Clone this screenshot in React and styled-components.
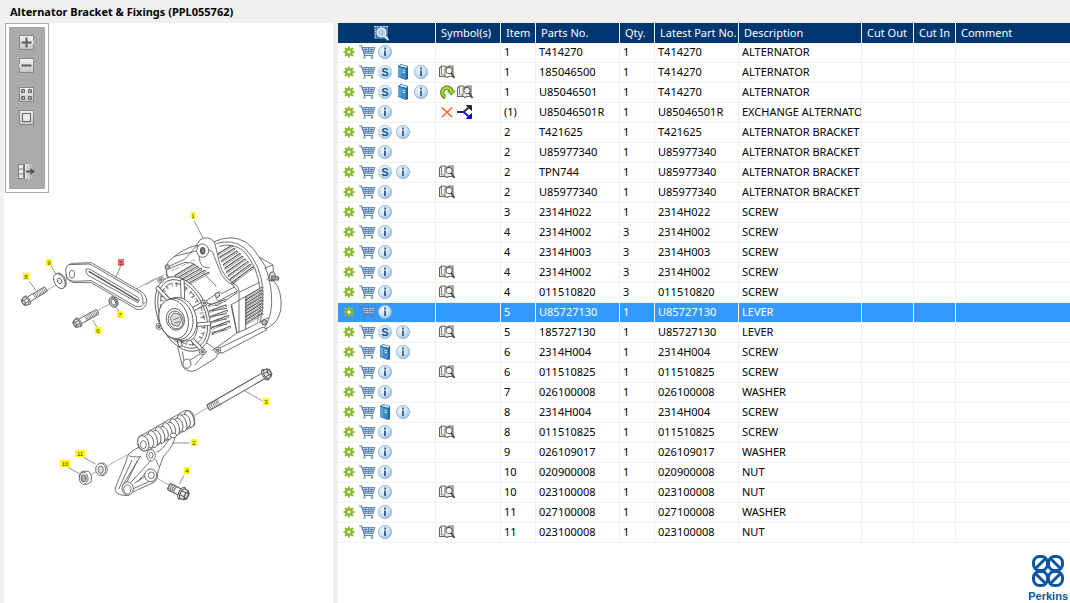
import styled, { createGlobalStyle } from 'styled-components'

const GlobalStyle = createGlobalStyle`
  * {
    box-sizing: border-box;
  }

  body {
    margin: 0;
    background-color: #f0f0f0;
    font-family: 'Noto Sans', 'Open Sans', sans-serif;
    font-size: 11px;
    color: #000;
  }
`

const Page = styled.div`
  display: flex;
  flex-direction: column;
  min-height: 100vh;
`

const TitleBar = styled.h1`
  margin: 0;
  padding: 4px 10px 0;
  height: 23px;
  font-size: 11px;
  line-height: 16px;
  font-weight: 700;
`

const Content = styled.main`
  flex: 1;
  display: grid;
  grid-template-columns: minmax(0, 329fr) minmax(0, 732fr);
  column-gap: 5px;
  padding-left: 4px;
`

const DrawingPanel = styled.section`
  background-color: #fff;
`

const ToolFrame = styled.div`
  width: 44px;
  margin-left: 1px;
  padding: 3px;
  border: 1px solid #aaa;
  background-color: #fff;
`

const ToolStrip = styled.div`
  display: flex;
  flex-direction: column;
  align-items: center;
  gap: 5px;
  padding: 7px 0 8px;
  background-color: #aaa;
`

const ToolButton = styled.button`
  width: 20px;
  height: 18px;
  margin-top: ${(props) => props.$space || 0}px;
  padding: 0;
  border: 0;
  background: none;
  cursor: pointer;

  svg {
    display: block;
  }
`

const Drawing = styled.svg`
  display: block;
  width: 100%;
  font-family: 'Liberation Sans', Arial, sans-serif;
`

const PartsPanel = styled.section`
  display: flex;
  flex-direction: column;
  background-color: #fff;
`

const Table = styled.table`
  width: 100%;
  table-layout: fixed;
  border-collapse: separate;
  border-spacing: 0;
`

const Head = styled.th`
  height: 20px;
  padding: 0 0 0 5px;
  border-right: 1px solid #f0f0f0;
  background-color: #003770;
  color: #fff;
  line-height: 18px;
  font-weight: 400;
  text-align: left;
  white-space: nowrap;

  &:last-child {
    border-right: 0;
  }
`

const Cell = styled.td`
  height: 20px;
  padding: 0 0 0 ${(props) => (props.$icons ? 2 : 3)}px;
  border-right: 1px solid #f0f0f0;
  border-bottom: 1px solid #f0f0f0;
  line-height: 18px;
  vertical-align: top;
  white-space: nowrap;
  overflow: hidden;

  &:last-child {
    border-right: 0;
  }
`

const Row = styled.tr`
  background-color: ${(props) => (props.$selected ? '#3399ff' : '#fff')};
  color: ${(props) => (props.$selected ? '#fff' : '#000')};
`

const IconRow = styled.div`
  display: flex;
  align-items: center;
  height: 18px;
`

const HeadIcon = styled.div`
  display: flex;
  justify-content: center;
  padding-right: 16px;
`

const IconButton = styled.button`
  display: flex;
  width: 18px;
  height: 18px;
  padding: 0;
  border: 0;
  background: none;
  cursor: pointer;
`

const Brand = styled.footer`
  display: flex;
  flex-direction: column;
  align-items: center;
  align-self: flex-end;
  margin: auto 2px 0 0;
  color: #0a55a0;
  font-family: 'Liberation Sans', Arial, sans-serif;
  font-size: 11px;
  line-height: 14px;
  font-weight: 700;
`

const columns = [
  ['Symbol(s)', 65],
  ['Item', 35],
  ['Parts No.', 84],
  ['Qty.', 35],
  ['Latest Part No.', 84],
  ['Description', 123],
  ['Cut Out', 52],
  ['Cut In', 42],
  ['Comment', null],
]

// actions, symbols, item, part, qty, latest part, description
const rows = [
  ['gci', '', '1', 'T414270', '1', 'T414270', 'ALTERNATOR'],
  ['gcsbi', 'm', '1', '185046500', '1', 'T414270', 'ALTERNATOR'],
  ['gcsbi', 'rm', '1', 'U85046501', '1', 'T414270', 'ALTERNATOR'],
  ['gci', 'xf', '(1)', 'U85046501R', '1', 'U85046501R', 'EXCHANGE ALTERNATO'],
  ['gcsi', '', '2', 'T421625', '1', 'T421625', 'ALTERNATOR BRACKET'],
  ['gci', '', '2', 'U85977340', '1', 'U85977340', 'ALTERNATOR BRACKET'],
  ['gcsi', 'm', '2', 'TPN744', '1', 'U85977340', 'ALTERNATOR BRACKET'],
  ['gci', 'm', '2', 'U85977340', '1', 'U85977340', 'ALTERNATOR BRACKET'],
  ['gci', '', '3', '2314H022', '1', '2314H022', 'SCREW'],
  ['gci', '', '4', '2314H002', '3', '2314H002', 'SCREW'],
  ['gci', '', '4', '2314H003', '3', '2314H003', 'SCREW'],
  ['gci', 'm', '4', '2314H002', '3', '2314H002', 'SCREW'],
  ['gci', 'm', '4', '011510820', '3', '011510820', 'SCREW'],
  ['gci', '', '5', 'U85727130', '1', 'U85727130', 'LEVER'],
  ['gcsi', 'm', '5', '185727130', '1', 'U85727130', 'LEVER'],
  ['gcbi', '', '6', '2314H004', '1', '2314H004', 'SCREW'],
  ['gci', 'm', '6', '011510825', '1', '011510825', 'SCREW'],
  ['gci', '', '7', '026100008', '1', '026100008', 'WASHER'],
  ['gcbi', '', '8', '2314H004', '1', '2314H004', 'SCREW'],
  ['gci', 'm', '8', '011510825', '1', '011510825', 'SCREW'],
  ['gci', '', '9', '026109017', '1', '026109017', 'WASHER'],
  ['gci', '', '10', '020900008', '1', '020900008', 'NUT'],
  ['gci', 'm', '10', '023100008', '1', '023100008', 'NUT'],
  ['gci', '', '11', '027100008', '1', '027100008', 'WASHER'],
  ['gci', 'm', '11', '023100008', '1', '023100008', 'NUT'],
]

const selectedRow = 13

const glyphs = {
  g: {
    label: 'Options',
    art: (
      <g fill="none">
        <path d="M9 3.5v11M3.5 9h11M5 5l8 8M13 5l-8 8" stroke="#8dbb3a" strokeWidth="2" />
        <circle cx="9" cy="9" r="2.8" fill="#fff" stroke="#86b92f" strokeWidth="2.4" />
      </g>
    ),
  },
  c: {
    label: 'Add to cart',
    art: (
      <g fill="none" stroke="#5b7fac">
        <path d="M4 4.5h12.5l-1.5 6H6z" fill="#c3d3e6" stroke="none" />
        <path d="M1 3h2.5l2.5 7.5.5 2H15" strokeWidth="1.2" />
        <path d="M4 4.5h13M5 6.5h11.5M5.5 8.5h10.500M6 10.5h9.5" strokeWidth="0.9" />
        <path d="M7.5 4.5l.5 6M10.5 4.5v6M13.5 4.5l-.5 6M17 4.5l-2 6" strokeWidth="0.8" />
        <circle cx="6.5" cy="14.5" r="0.9" />
        <circle cx="14" cy="14.5" r="0.9" />
      </g>
    ),
  },
  s: {
    label: 'Supersession',
    art: (
      <g>
        <circle cx="9" cy="9" r="6.8" fill="url(#disc)" stroke="#a4c3de" strokeWidth="0.6" />
        <text x="9" y="13" textAnchor="middle" fontSize="11" fontWeight="700" fill="#0d5592">S</text>
      </g>
    ),
  },
  b: {
    label: 'Catalogue',
    art: (
      <g>
        <path d="M4 3l3-2 7 2v13l-2 1-8-3z" fill="#1f659c" />
        <path d="M7 4.5l5 1.5v10.5l-5-2z" fill="#3f8dc6" />
        <path d="M4 3.5l3 1v10l-3-1z" fill="#5aa3d8" />
        <path d="M5 3l2.5-1.2 6 1.7-1.3 1.2z" fill="#e2edf5" />
        <path d="M8.5 7l2.5.8M8.5 9l2.5.8" stroke="#d7eafa" />
      </g>
    ),
  },
  i: {
    label: 'Information',
    art: (
      <g>
        <circle cx="9" cy="9" r="6.7" fill="url(#disc)" stroke="#91b3d2" strokeWidth="0.8" />
        <path d="M8 4.5h2v2H8zM8 7.5h2V13H8z" fill="#42699c" />
      </g>
    ),
  },
  m: {
    label: 'Find in book',
    art: (
      <g fill="none" stroke="#66645c">
        <path d="M3.5 3h3L9 4.5 11 3h4v10.5h-4L9 14.5l-1.5-1h-6V5z" fill="#f4f4ee" strokeWidth="1.1" />
        <path d="M3.5 3.5v8l3.5 1v-8" strokeWidth="0.8" />
        <circle cx="11" cy="7.5" r="3.1" fill="#fbfbfb" strokeWidth="1.1" />
        <path d="M13 10l3.5 5" stroke="#4c4a45" strokeWidth="1.8" />
      </g>
    ),
  },
  r: {
    label: 'Replaced',
    art: (
      <g fill="none">
        <path d="M7.5 14A4.8 4.8 0 1 1 13.6 8" stroke="#4d6415" strokeWidth="4" />
        <path d="M9.5 8H17l-3.7 4.2z" fill="#98d422" stroke="#4d6415" strokeWidth="0.7" />
        <path d="M7.5 13.7A4.6 4.6 0 1 1 13.5 8.7" stroke="#a3e129" strokeWidth="2.4" />
      </g>
    ),
  },
  x: {
    label: 'Not available',
    art: <path d="M4 4.5l10 9.5M14 4.5L4 14" fill="none" stroke="#ff6429" strokeWidth="1.6" />,
  },
  f: {
    label: 'Alternatives',
    art: (
      <g fill="none" strokeWidth="1.8">
        <path d="M1 9h7" stroke="#111155" />
        <path d="M7.5 9L14 3.5" stroke="#292929" />
        <path d="M7.5 9l6.5 5.5" stroke="#1717aa" />
        <path d="M10.5 2.5h5v5z" fill="#292929" stroke="#292929" strokeWidth="1" />
        <path d="M15.5 10.5v5h-5z" fill="#0505db" stroke="#0505db" strokeWidth="1" />
      </g>
    ),
  },
}

function Glyph({ name, title }) {
  return (
    <svg width="18" height="18" viewBox="0 0 18 18" role={title ? 'img' : undefined} aria-label={title}>
      {glyphs[name].art}
    </svg>
  )
}

function SearchGlyph() {
  return (
    <svg width="18" height="18" viewBox="0 0 18 18" role="img" aria-label="Search">
      <path d="M2 2h14v13H2z" fill="#487baa" />
      <path d="M2 2.5h14" stroke="#d5e6f3" strokeDasharray="2 1" />
      <path d="M3.5 5v9" stroke="#b7d3e8" strokeDasharray="1 1" />
      <circle cx="9.5" cy="8.5" r="4.3" fill="#a9cbe3" stroke="#e7f1f8" strokeWidth="1.4" />
      <path d="M12.7 12l3.6 4" stroke="#e4edf4" strokeWidth="2" />
    </svg>
  )
}

const tools = [
  {
    label: 'Zoom in',
    art: (
      <g>
        <path d="M2.5 1.5h14v5l2 2-2 2v5h-14z" fill="url(#key)" stroke="#888" />
        <path d="M4.5 8.5h10M9.5 3.5v10" stroke="#5e5e5e" strokeWidth="2" />
      </g>
    ),
  },
  {
    label: 'Zoom out',
    art: (
      <g>
        <path d="M2.5 1.5h14v14h-14v-5l-2-2 2-2z" fill="url(#key)" stroke="#888" />
        <path d="M4.5 8.5h10" stroke="#5e5e5e" strokeWidth="2" />
      </g>
    ),
  },
  {
    label: 'Zoom to fit',
    space: 6,
    art: (
      <g>
        <rect x="2.5" y="1.5" width="14" height="14" fill="url(#key)" stroke="#888" />
        <path d="M4.5 3.5h3v3h-3zM11.5 3.5h3v3h-3zM4.5 10.5h3v3h-3zM11.5 10.5h3v3h-3z" fill="#aaa" stroke="#666" />
      </g>
    ),
  },
  {
    label: 'Actual size',
    art: (
      <g>
        <rect x="2.5" y="1.5" width="14" height="14" fill="url(#key)" stroke="#888" />
        <rect x="5.5" y="4.5" width="8" height="8" fill="#e8e8e8" stroke="#686868" />
      </g>
    ),
  },
  {
    label: 'Hide list',
    space: 31,
    art: (
      <g>
        <path d="M1.5 1.5h5v14h-5zM1.5 6h5M1.5 11h5" fill="#eee" stroke="#808080" />
        <path d="M7 1h9v15H7z" fill="url(#fade)" />
        <path d="M7.5 1v15" stroke="#777" />
        <path d="M9 8.5h6" stroke="#555" strokeWidth="2" />
        <path d="M13.5 5l4.5 3.5-4.5 3.5z" fill="#555" />
      </g>
    ),
  },
]

const range = (count) => Array.from({ length: count }, (_, i) => i)

function Fin({ x1, y1, x2, y2 }) {
  return (
    <g strokeLinecap="round">
      <path d={`M${x1} ${y1}L${x2} ${y2}`} stroke="#555" strokeWidth="7" />
      <path d={`M${x1 + 1} ${y1 + 1}L${x2} ${y2 + 1}`} stroke="#f4f4f4" strokeWidth="3" />
    </g>
  )
}

function Alternator() {
  return (
    <g transform="translate(145 205) scale(0.3333)" fill="#fff" stroke="#555" strokeWidth="2.5">
      <path d="M0 240L38 220M48 214L58 209" stroke="#999" />
      <path d="M148 48L174 100" stroke="#777" />
      <path d="M98 425l14 58q16 24 42 12l56-34 18-26-40-40z" />
      <path d="M112 440l6 32 20-8 34-22M150 480l36-42" fill="none" />
      <ellipse cx="126" cy="476" rx="12" ry="14" />
      <path d="M208 110Q260 86 304 112Q326 128 342 156L384 180L387 228Q412 256 408 312Q400 352 372 366L228 444L180 410L64 210V188Q66 170 82 160Q112 132 156 120L166 104Q188 90 208 110z" />
      <path d="M214 116Q262 100 300 130Q350 180 354 262Q356 312 346 352M222 124Q262 112 296 138Q340 184 346 262Q348 310 338 350" fill="none" />
      <path d="M342 156l18 26q22 60 20 114-2 42-22 74M384 180l-26 10M387 228q-18 2-22-8" fill="none" />
      {range(9).map((i) => (
        <Fin key={i} x1={222 + i * 5} y1={146 + i * 11} x2={260 + i * 8} y2={124 + i * 8} />
      ))}
      {range(9).map((i) => (
        <Fin key={i} x1={304} y1={276 + i * 10} x2={352 - (i % 2)} y2={248 + i * 10} />
      ))}
      <path d="M262 240L276 226M258 300l44-26v100M258 300l18 84 24-10 70-36M282 262l62-30" fill="none" />
      <path d="M64 188l56-26 36-42 46 20 22 56q14 34 40 44l12 24-60 38-80-22-70-70z" />
      <path d="M156 122l10 52q10 18 28 14M208 108l16 68q12 42 40 58 20 10 18 30v28M70 192l50-20M88 154l66-16M120 172q28 0 38 14l56 58" fill="none" />
      <path d="M80 198l70-34" stroke="#999" strokeDasharray="26 6" />
      <ellipse cx="173" cy="137" rx="18" ry="20" />
      <ellipse cx="173" cy="137" rx="6" ry="9" fill="#888" strokeWidth="4" />
      <circle cx="67" cy="186" r="7" fill="#bbb" />
      {range(5).map((i) => (
        <Fin key={i} x1={92 + i * 10} y1={212 + i * 6} x2={146 + i * 11} y2={180 + i * 6} />
      ))}
      <path d="M180 290l32-22M212 268q10-14 18-2l38-20 10 12-50 26q-10 8-14-4z" />
      <circle cx="217" cy="270" r="7" fill="#ddd" />
      <path d="M260 300l16 84-76 54M282 292v90" fill="none" />
      {range(6).map((i) => (
        <Fin key={i} x1={193 + i * 2} y1={302 + i * 17} x2={240 + i * 3} y2={286 + i * 16} />
      ))}
      {range(5).map((i) => (
        <path key={i} d={`M200 ${318 + i * 16}l46-8`} stroke="#666" strokeWidth="3" />
      ))}
      <path d="M222 430l132-64 12 8-134 70q-12-2-10-14z" />
      <ellipse cx="113" cy="327" rx="74" ry="118" transform="rotate(-24 113 327)" />
      <ellipse cx="113" cy="327" rx="66" ry="109" transform="rotate(-24 113 327)" />
      <ellipse
        cx="113"
        cy="327"
        rx="54"
        ry="94"
        transform="rotate(-24 113 327)"
        fill="none"
        stroke="#888"
        strokeWidth="12"
        strokeDasharray="5 14 3 9"
      />
      <ellipse cx="113" cy="327" rx="58" ry="98" transform="rotate(-24 113 327)" fill="none" strokeDasharray="16 10" />
      {[
        'M38 250L78 292',
        'M112 228L114 290',
        'M178 294L140 315',
        'M192 356L148 360',
        'M174 438L132 394',
        'M106 420L100 400',
        'M44 344L56 338',
      ].map((d) => (
        <g key={d} strokeLinecap="round">
          <path d={d} strokeWidth="13" />
          <path d={d} stroke="#fff" strokeWidth="8" />
        </g>
      ))}
      {[[47, 224], [178, 294], [172, 440], [42, 364], [218, 436]].map(([x, y]) => (
        <g key={x}>
          <circle cx={x} cy={y} r="9" />
          <circle cx={x} cy={y} r="4" fill="#999" />
        </g>
      ))}
      <path d="M74 282q40-10 66 30 28 50 10 82-8 12-20 14l-32 0z" />
      <ellipse cx="104" cy="342" rx="50" ry="66" transform="rotate(-16 104 342)" />
      <ellipse cx="93" cy="342" rx="50" ry="63" transform="rotate(-16 93 342)" />
      <ellipse cx="86" cy="342" rx="43" ry="60" transform="rotate(-16 86 342)" />
      <ellipse cx="91" cy="343" rx="27" ry="33" transform="rotate(-16 91 343)" />
      <ellipse cx="92" cy="345" rx="22" ry="27" transform="rotate(-16 92 345)" />
      <path d="M76 338l10-14 18 4 6 18-10 18-18-4z" fill="#ddd" />
      <path d="M86 344l16-6M88 354l16-4" />
      <ellipse cx="382" cy="214" rx="9" ry="13" fill="#ddd" strokeWidth="3" />
      <path d="M380 212l22 4-2 10-20-2z" fill="#999" />
      <circle cx="358" cy="352" r="8" fill="#bbb" strokeWidth="3" />
    </g>
  )
}

function Bolt({ x, y, angle, length, thread, size = 1 }) {
  return (
    <g transform={`translate(${x} ${y}) rotate(${angle}) scale(${size})`}>
      <rect x="8" y="-8" width={length} height="16" rx="3" />
      <path
        d={range(Math.floor(thread / 5)).map((i) => `M${length + 6 - i * 5} -8q4 8 0 16`).join('')}
        fill="none"
        stroke="#777"
      />
      <ellipse cx="4" cy="0" rx="7" ry="15" />
      <path d="M-12 -7l6-5h10l3 7v10l-3 7H-6l-6-5z" fill="#eee" />
      <path d="M-5 -12l-3 7v10l3 7M-8 -5H6M-8 5H6" fill="none" />
      <ellipse cx="-8" cy="0" rx="4" ry="7" fill="#ccc" />
    </g>
  )
}

function Lever() {
  return (
    <g transform="translate(10 240) scale(0.3333)" fill="#fff" stroke="#555" strokeWidth="2.5">
      <path d="M108 152l74-42M262 212l176-98" stroke="#999" />
      <path d="M58 124l20 28M124 78l14 26M332 78l-14 34M314 198l14 16M248 240l14 24" stroke="#777" />
      <path d="M168 102q-6-28 20-32l56-2 152 88q20 18 12 38-8 18-28 14L244 128l-52 0q-24-6-24-26z" />
      <path d="M168 102q2 20 24 22l52-2 134 78q18 4 26-14M176 74l64-2 148 86q14 12 10 32" fill="none" />
      <ellipse cx="186" cy="103" rx="8" ry="12" />
      <path d="M228 88q6-4 12 0l144 84q8 8 0 16L234 106q-8-8-6-18z" />
      <path d="M236 94l148 88" strokeWidth="4" />
      <g transform="rotate(-28 149 123)">
        <ellipse cx="152" cy="123" rx="15" ry="24" />
        <ellipse cx="148" cy="123" rx="15" ry="24" />
        <ellipse cx="149" cy="123" rx="6" ry="9" fill="#eee" />
      </g>
      <g transform="rotate(-28 311 186)">
        <ellipse cx="312" cy="186" rx="11" ry="16" />
        <ellipse cx="309" cy="186" rx="11" ry="16" fill="#ccc" />
        <ellipse cx="310" cy="186" rx="6" ry="10" />
      </g>
      <Bolt x={48} y={183} angle={-31} length={62} thread={48} />
      <Bolt x={202} y={249} angle={-29} length={62} thread={48} />
    </g>
  )
}

function Bracket() {
  return (
    <g transform="translate(50 360) scale(0.3333)" fill="#fff" stroke="#555" strokeWidth="2.5">
      <path d="M430 168l46-26M122 344l16-8M172 318l100-56M310 348l48 28" stroke="#999" />
      <path d="M580 90l56 32M366 249h52M402 346l-14 26M100 292l36 20M54 322l36 20" stroke="#777" />
      <Bolt x={650} y={42} angle={150} length={168} thread={38} size={1.15} />
      <Bolt x={400} y={402} angle={208} length={30} thread={24} size={1.3} />
      <path d="M262 264q-34 18-32 36l-34 84q-4 18 24 22 20 2 28-10l66-30q10-10 10-32l16-44q36-36 36-70z" />
      <path d="M238 288q28 6 34 0l-54 88M246 300l-40 88M262 302l-32 66M254 370l44-30M250 386l62-28M306 298l-68 74M298 326l-36 40M318 298q4 20 12 22M320 276q16-4 36-36" fill="none" />
      <ellipse cx="303" cy="286" rx="13" ry="17" />
      <ellipse cx="303" cy="286" rx="6" ry="9" />
      <ellipse cx="302" cy="346" rx="18" ry="19" />
      <ellipse cx="304" cy="346" rx="9" ry="10" />
      <ellipse cx="233" cy="386" rx="17" ry="20" />
      <ellipse cx="232" cy="388" rx="11" ry="14" />
      <path d="M264 238q0-10 14-14l126-72q28-4 30 28v16l-142 76q-22 6-28-16z" />
      {range(12).map((i) => (
        <ellipse
          key={i}
          cx={418 - i * 11}
          cy={177 + i * 6}
          rx="13"
          ry={i % 2 ? 21 : 26}
          transform={`rotate(-18 ${418 - i * 11} ${177 + i * 6})`}
        />
      ))}
      <ellipse cx="280" cy="250" rx="16" ry="24" transform="rotate(-18 280 250)" />
      <ellipse cx="280" cy="254" rx="9" ry="12" />
      <ellipse cx="370" cy="226" rx="10" ry="7" />
      <ellipse cx="157" cy="328" rx="15" ry="19" />
      <ellipse cx="152" cy="328" rx="15" ry="18" />
      <ellipse cx="152" cy="329" rx="8" ry="11" fill="#ddd" />
      <path d="M87 348l9-14 20 0 9 14-2 18-14 8-16-6z" />
      <ellipse cx="101" cy="355" rx="13" ry="18" />
      <ellipse cx="101" cy="355" rx="8" ry="11" fill="#aaa" />
    </g>
  )
}

const callouts = [
  [193, 216, '1'],
  [49, 263, '9'],
  [26, 277, '8'],
  [121, 263, '5', true],
  [120, 315, '7'],
  [98, 331, '6'],
  [266, 402, '3'],
  [194, 443, '2'],
  [187, 471, '4'],
  [80, 454, '11'],
  [65, 464, '10'],
]

function Callout({ x, y, label, active }) {
  const width = label.length > 1 ? 10 : label === '1' ? 4 : 6
  return (
    <g>
      <rect x={x - width / 2} y={y - 4} width={width} height="7" fill={active ? '#f07070' : '#ffff00'} />
      <text x={x} y={y + 2} fontSize="6" textAnchor="middle" fill={active ? '#802020' : '#333'}>
        {label}
      </text>
    </g>
  )
}

function PartsDrawing() {
  return (
    <Drawing viewBox="4 193 329 320" role="img" aria-label="Alternator bracket and fixings">
      <Alternator />
      <Lever />
      <Bracket />
      {callouts.map(([x, y, label, active]) => (
        <Callout key={label} x={x} y={y} label={label} active={active} />
      ))}
    </Drawing>
  )
}

function SharedGradients() {
  return (
    <defs>
      <radialGradient id="disc" cx="0.4" cy="0.35" r="0.7">
        <stop offset="0" stopColor="#f4fafd" />
        <stop offset="0.6" stopColor="#c9dff0" />
        <stop offset="1" stopColor="#8db8db" />
      </radialGradient>
      <linearGradient id="key" x2="0" y2="1">
        <stop offset="0" stopColor="#f2f2f2" />
        <stop offset="1" stopColor="#c4c4c4" />
      </linearGradient>
      <linearGradient id="fade">
        <stop offset="0" stopColor="#ededed" />
        <stop offset="1" stopColor="#aaa" />
      </linearGradient>
    </defs>
  )
}

function Toolbar() {
  return (
    <ToolFrame>
      <ToolStrip>
        {tools.map((tool, index) => (
          <ToolButton key={tool.label} $space={tool.space} aria-label={tool.label}>
            <svg width="20" height="18" viewBox="0 0 20 18">
              {index === 0 && <SharedGradients />}
              {tool.art}
            </svg>
          </ToolButton>
        ))}
      </ToolStrip>
    </ToolFrame>
  )
}

function PartsTable() {
  return (
    <Table>
      <colgroup>
        <col width="98" />
        {columns.map(([name, width]) => (
          <col key={name} width={width || undefined} />
        ))}
      </colgroup>
      <thead>
        <tr>
          <Head>
            <HeadIcon>
              <SearchGlyph />
            </HeadIcon>
          </Head>
          {columns.map(([name]) => (
            <Head key={name}>{name}</Head>
          ))}
        </tr>
      </thead>
      <tbody>
        {rows.map(([actions, symbols, ...values], index) => (
          <Row key={index} $selected={index === selectedRow}>
            <Cell $icons>
              <IconRow>
                {[...actions].map((name) => (
                  <IconButton key={name} aria-label={glyphs[name].label}>
                    <Glyph name={name} />
                  </IconButton>
                ))}
              </IconRow>
            </Cell>
            <Cell $icons>
              <IconRow>
                {[...symbols].map((name) => (
                  <Glyph key={name} name={name} title={glyphs[name].label} />
                ))}
              </IconRow>
            </Cell>
            {values.map((value, i) => (
              <Cell key={i}>{value}</Cell>
            ))}
            <Cell />
            <Cell />
            <Cell />
          </Row>
        ))}
      </tbody>
    </Table>
  )
}

function PerkinsBrand() {
  return (
    <Brand>
      <svg width="34" height="35" viewBox="0 0 34 35" aria-hidden="true">
        <g fill="none" stroke="#0a55a0" strokeWidth="3">
          <rect x="2.5" y="2.5" width="14" height="14" rx="6" />
          <rect x="17.5" y="2.5" width="14" height="14" rx="6" />
          <rect x="2.5" y="17.5" width="14" height="14" rx="6" />
          <rect x="17.5" y="17.5" width="14" height="14" rx="6" />
          <path d="M5 14L14 5M29 14L20 5M5 20l9 9M29 20l-9 9" />
        </g>
      </svg>
      Perkins
    </Brand>
  )
}

function App() {
  return (
    <>
      <GlobalStyle />
      <Page>
        <TitleBar>Alternator Bracket &amp; Fixings (PPL055762)</TitleBar>
        <Content>
          <DrawingPanel>
            <Toolbar />
            <PartsDrawing />
          </DrawingPanel>
          <PartsPanel>
            <PartsTable />
            <PerkinsBrand />
          </PartsPanel>
        </Content>
      </Page>
    </>
  )
}

export default App
